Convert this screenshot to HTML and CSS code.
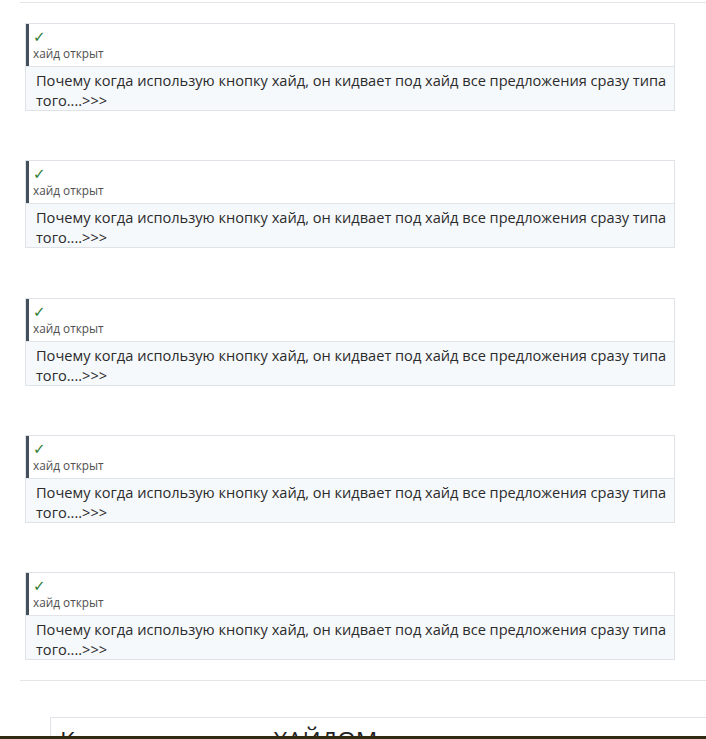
FILE: index.html
```html
<!DOCTYPE html>
<html>
<head>
<meta charset="utf-8">
<link rel="stylesheet" href="styles.css">
</head>
<body>
<div class="thread">
  <div class="posts">
    <div class="hide">
      <div class="hide-head"><span class="check">✓</span><span class="label">хайд открыт</span></div>
      <div class="hide-body">Почему когда использую кнопку хайд, он кидвает под хайд все предложения сразу типа того....&gt;&gt;&gt;</div>
    </div>
    <div class="hide">
      <div class="hide-head"><span class="check">✓</span><span class="label">хайд открыт</span></div>
      <div class="hide-body">Почему когда использую кнопку хайд, он кидвает под хайд все предложения сразу типа того....&gt;&gt;&gt;</div>
    </div>
    <div class="hide">
      <div class="hide-head"><span class="check">✓</span><span class="label">хайд открыт</span></div>
      <div class="hide-body">Почему когда использую кнопку хайд, он кидвает под хайд все предложения сразу типа того....&gt;&gt;&gt;</div>
    </div>
    <div class="hide">
      <div class="hide-head"><span class="check">✓</span><span class="label">хайд открыт</span></div>
      <div class="hide-body">Почему когда использую кнопку хайд, он кидвает под хайд все предложения сразу типа того....&gt;&gt;&gt;</div>
    </div>
    <div class="hide">
      <div class="hide-head"><span class="check">✓</span><span class="label">хайд открыт</span></div>
      <div class="hide-body">Почему когда использую кнопку хайд, он кидвает под хайд все предложения сразу типа того....&gt;&gt;&gt;</div>
    </div>
  </div>
  <div class="next">
    <div class="next-title">Как пользоваться ХАЙДОМ</div>
  </div>
</div>
<div class="footer-bar"></div>
</body>
</html>
```
FILE: styles.css
```css
html, body {
  margin: 0;
  padding: 0;
  background: #fff;
  font-family: "Open Sans", "Noto Sans", sans-serif;
  color: #2b2b2b;
  overflow: hidden;
  height: 739px;
}
.thread {
  margin-left: 20px;
  padding-top: 2px;
}
.posts {
  border-top: 1px solid #e3e6e9;
  border-bottom: 1px solid #e3e6e9;
  padding: 20px 0 20px 5px;
  display: flex;
  flex-direction: column;
  gap: 49.25px;
}
.hide {
  width: 648px;
  border: 1px solid #dfe3e7;
}
.hide-head {
  border-left: 3px solid #44505c;
  height: 42px;
  padding-left: 4px;
  display: flex;
  flex-direction: column;
  background: #fff;
}
.check {
  color: #2f7d32;
  font-size: 15px;
  line-height: 15px;
  margin-top: 6px;
  font-weight: bold;
  font-family: "DejaVu Sans", sans-serif;
}
.label {
  font-size: 11.8px;
  line-height: 16px;
  color: #505050;
}
.hide-body {
  border-top: 1px solid #e1e5e9;
  background: #f6f9fc;
  padding: 3px 6px 0 10px;
  font-size: 14.6px;
  line-height: 20px;
  color: #2b2b2b;
}
.next {
  margin-top: 36px;
  margin-left: 30px;
  border: 1px solid #dfe3e7;
  border-right: none;
  height: 60px;
  padding: 6px 9px;
}
.next-title {
  font-size: 24px;
  line-height: 32px;
  color: #222;
}
.footer-bar {
  position: fixed;
  left: 0;
  right: 0;
  top: 736px;
  height: 3px;
  background: #2f2a10;
}
```
